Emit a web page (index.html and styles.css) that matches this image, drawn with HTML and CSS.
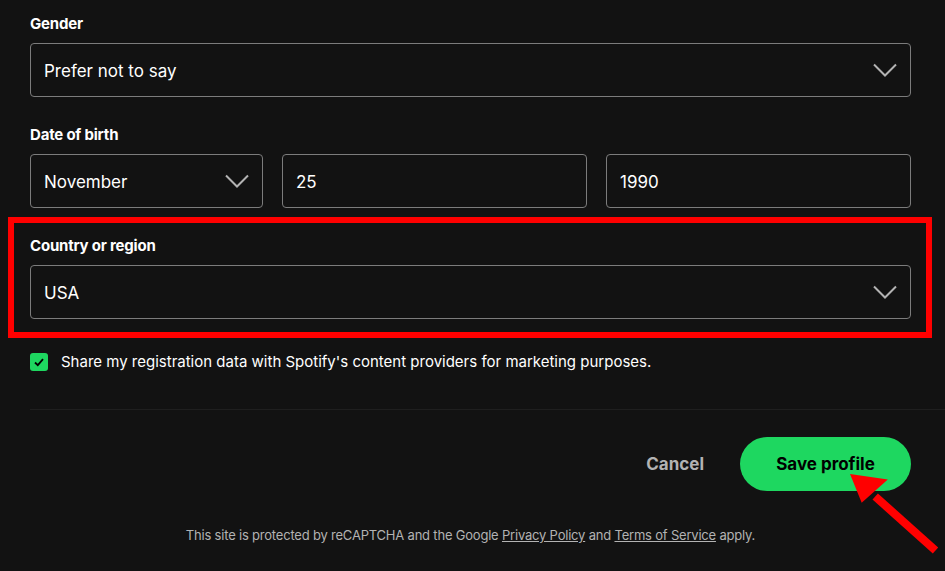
FILE: index.html
```html
<!DOCTYPE html>
<html lang="en">

<head>
    <meta charset="UTF-8" />
    <meta name="viewport" content="width=device-width, initial-scale=1.0" />
    <title>Edit profile</title>
    <link rel="stylesheet" href="styles.css">
</head>

<body>
    <form class="profile-form">
        <div class="field">
            <label class="label">Gender</label>
            <div class="select">
                <span>Prefer not to say</span>
                <svg class="chevron" viewBox="0 0 24 14"><path d="M1 1.5 L12 12.5 L23 1.5" /></svg>
            </div>
        </div>

        <div class="field">
            <label class="label">Date of birth</label>
            <div class="dob-row">
                <div class="select month">
                    <span>November</span>
                    <svg class="chevron" viewBox="0 0 24 14"><path d="M1 1.5 L12 12.5 L23 1.5" /></svg>
                </div>
                <div class="select input">25</div>
                <div class="select input">1990</div>
            </div>
        </div>

        <div class="field highlighted">
            <label class="label">Country or region</label>
            <div class="select">
                <span>USA</span>
                <svg class="chevron" viewBox="0 0 24 14"><path d="M1 1.5 L12 12.5 L23 1.5" /></svg>
            </div>
        </div>

        <div class="checkbox-row">
            <span class="checkbox">
                <svg viewBox="0 0 18 18"><path d="M5 9.5 L7.8 12.2 L13 6.2" /></svg>
            </span>
            <span>Share my registration data with Spotify's content providers for marketing purposes.</span>
        </div>

        <hr class="divider">

        <div class="actions">
            <button type="button" class="btn-cancel">Cancel</button>
            <button type="button" class="btn-save">Save profile</button>
        </div>

        <p class="recaptcha">This site is protected by reCAPTCHA and the Google <a href="#">Privacy Policy</a> and <a href="#">Terms of Service</a> apply.</p>
    </form>

    <!-- annotation arrow -->
    <svg class="arrow" viewBox="0 0 100 90">
        <path class="shaft" d="M95 85 L28 25" />
        <polygon points="0,0 42,6 13,32" />
    </svg>
</body>

</html>
```

FILE: styles.css
```css
body {
    margin: 0;
    background: #121212;
    color: #fff;
    font-family: Inter, "Noto Sans", sans-serif;
    overflow: hidden;
    position: relative;
    height: 571px;
}

.profile-form {
    padding: 13px 34px 0 30px;
}

.field {
    margin-bottom: 27px;
}

.label {
    display: block;
    font-size: 15px;
    font-weight: bold;
    line-height: 20px;
    letter-spacing: -0.2px;
    margin-bottom: 10px;
    padding-top: 1px;
    height: 19px;
}

.select {
    display: flex;
    align-items: center;
    justify-content: space-between;
    box-sizing: border-box;
    height: 54px;
    padding: 2px 13px 0;
    border: 1px solid #7c7c7c;
    border-radius: 4px;
    font-size: 17px;
}

.chevron {
    width: 24px;
    height: 14px;
    margin-top: -2px;
    fill: none;
    stroke: #b3b3b3;
    stroke-width: 2;
}

.dob-row {
    display: grid;
    grid-template-columns: 233px 1fr 1fr;
    gap: 19px;
}

.highlighted {
    position: relative;
}

.highlighted::after {
    content: "";
    position: absolute;
    top: -18px;
    left: -22px;
    right: -21px;
    bottom: -19px;
    border: 6px solid #f00;
    pointer-events: none;
}

.checkbox-row {
    display: flex;
    align-items: center;
    gap: 13px;
    margin-top: 33px;
    font-size: 15px;
    line-height: 20px;
}

.checkbox {
    width: 18px;
    height: 18px;
    border-radius: 3px;
    background: #1ed760;
    flex-shrink: 0;
}

.checkbox svg {
    display: block;
    width: 18px;
    height: 18px;
    fill: none;
    stroke: #000;
    stroke-width: 1.8;
}

.divider {
    border: none;
    border-top: 1px solid #1f1f1f;
    margin: 37px -34px 0 0;
}

.actions {
    display: flex;
    justify-content: flex-end;
    align-items: center;
    gap: 36px;
    margin-top: 27px;
}

.actions button {
    font-family: inherit;
    font-size: 17px;
    font-weight: bold;
    border: none;
    cursor: pointer;
}

.btn-cancel {
    background: none;
    color: #b3b3b3;
    padding: 0;
}

.btn-save {
    background: #1ed760;
    color: #000;
    height: 54px;
    width: 171px;
    border-radius: 27px;
}

.recaptcha {
    text-align: center;
    font-size: 13px;
    color: #b3b3b3;
    letter-spacing: -0.2px;
    margin: 36px 0 0;
}

.recaptcha a {
    color: #b3b3b3;
}

.arrow {
    position: absolute;
    left: 850px;
    top: 474px;
    width: 90px;
    height: 81px;
}

.arrow .shaft {
    stroke: #f00;
    stroke-width: 9;
}

.arrow polygon {
    fill: #f00;
}
```
